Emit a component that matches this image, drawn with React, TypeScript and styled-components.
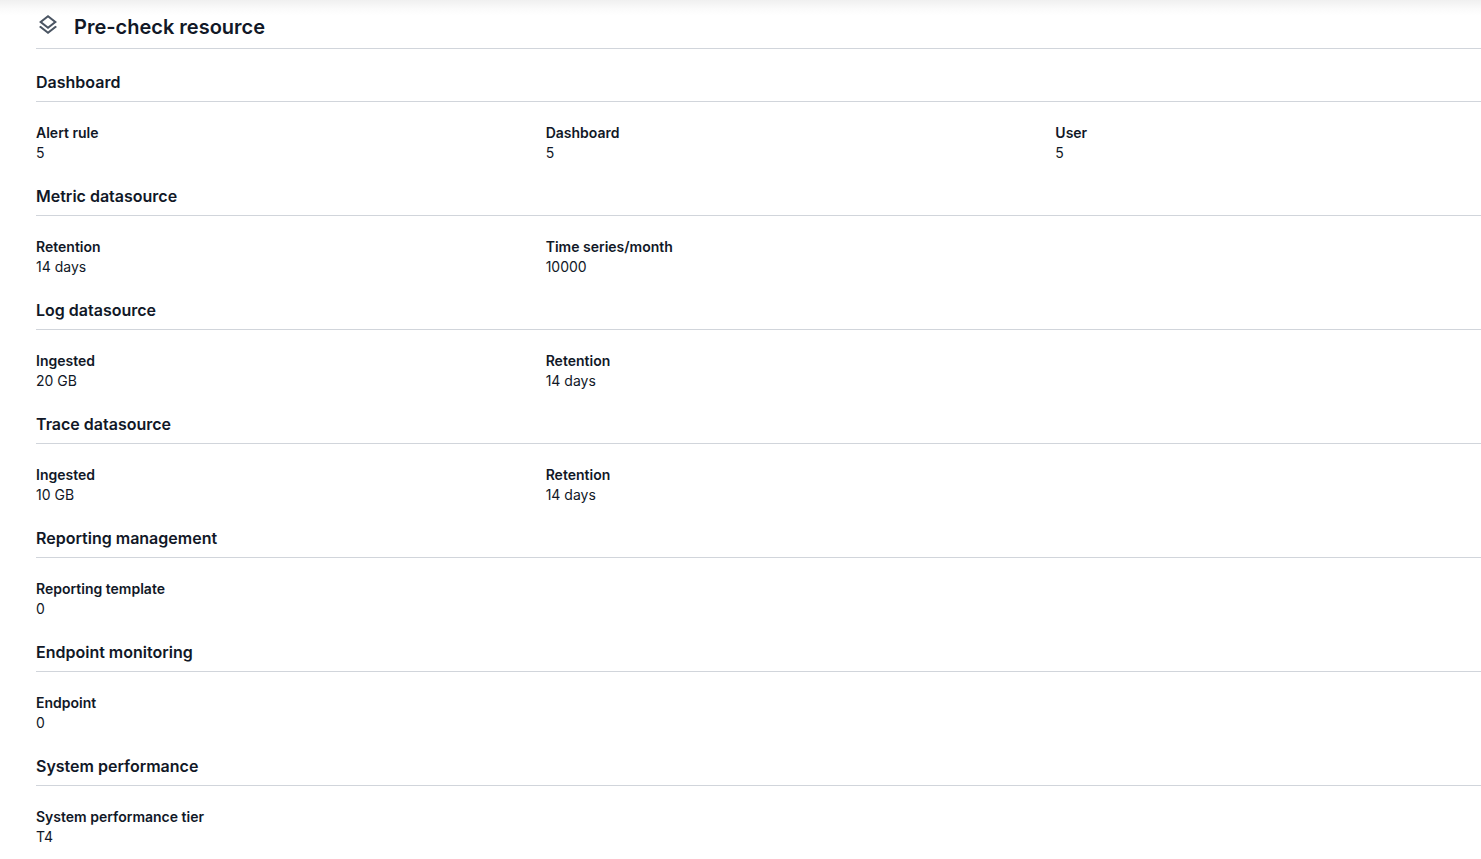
import React from "react";
import styled, { createGlobalStyle } from "styled-components";

const GlobalStyle = createGlobalStyle`
  *, *::before, *::after { box-sizing: border-box; }
  body {
    margin: 0;
    background: #ffffff;
    color: #111827;
    font-family: Inter, "Liberation Sans", sans-serif;
    font-size: 14px;
    line-height: 20px;
  }
`;

const Page = styled.main`
  min-height: 100vh;
  padding: 8px 0 12px 36px;
  overflow: hidden;
  background: linear-gradient(#f0f0f0, #fbfbfb 9px, #ffffff 16px) top / 100% 16px no-repeat;
`;

/* The panel is wider than its viewport and runs on past the right edge. */
const Panel = styled.div`
  margin-right: -60px;
`;

const PageHeader = styled.header`
  display: flex;
  align-items: center;
  gap: 14px;
  height: 41px;
  padding-bottom: 3px;
  border-bottom: 1px solid #d1d5db;
`;

const LayersIcon = styled.svg`
  display: block;
  width: 24px;
  height: 24px;
  margin-bottom: 4px;
  fill: #4b5563;
`;

const PageTitle = styled.h1`
  margin: 0;
  font-size: 20px;
  font-weight: 600;
  line-height: 28px;
`;

const Section = styled.section`
  padding-top: 21px;
`;

const SectionTitle = styled.h2`
  margin: 0;
  padding-bottom: 7px;
  border-bottom: 1px solid #d1d5db;
  font-size: 16px;
  font-weight: 600;
  line-height: 24px;
`;

const Fields = styled.dl`
  display: grid;
  grid-template-columns: repeat(3, minmax(0, 1fr));
  column-gap: 24px;
  margin: 0;
  padding-top: 21px;
`;

const Field = styled.div``;

const Label = styled.dt`
  font-weight: 600;
`;

const Value = styled.dd`
  margin: 0;
`;

type Group = { title: string; fields: [string, string][] };

const groups: Group[] = [
  { title: "Dashboard", fields: [["Alert rule", "5"], ["Dashboard", "5"], ["User", "5"]] },
  { title: "Metric datasource", fields: [["Retention", "14 days"], ["Time series/month", "10000"]] },
  { title: "Log datasource", fields: [["Ingested", "20 GB"], ["Retention", "14 days"]] },
  { title: "Trace datasource", fields: [["Ingested", "10 GB"], ["Retention", "14 days"]] },
  { title: "Reporting management", fields: [["Reporting template", "0"]] },
  { title: "Endpoint monitoring", fields: [["Endpoint", "0"]] },
  { title: "System performance", fields: [["System performance tier", "T4"]] },
];

export default function App() {
  return (
    <>
      <GlobalStyle />
      <Page>
        <Panel>
          <PageHeader>
            <LayersIcon viewBox="0 0 24 24" aria-hidden="true">
              <path d="M11.99 18.54l-7.37-5.73L3 14.07l9 7 9-7-1.63-1.27zM12 16l7.36-5.73L21 9l-9-7-9 7 1.63 1.27L12 16zm0-11.47L17.74 9 12 13.47 6.26 9 12 4.53z" />
            </LayersIcon>
            <PageTitle>Pre-check resource</PageTitle>
          </PageHeader>
          {groups.map((group) => (
            <Section key={group.title}>
              <SectionTitle>{group.title}</SectionTitle>
              <Fields>
                {group.fields.map(([label, value]) => (
                  <Field key={label}>
                    <Label>{label}</Label>
                    <Value>{value}</Value>
                  </Field>
                ))}
              </Fields>
            </Section>
          ))}
        </Panel>
      </Page>
    </>
  );
}
